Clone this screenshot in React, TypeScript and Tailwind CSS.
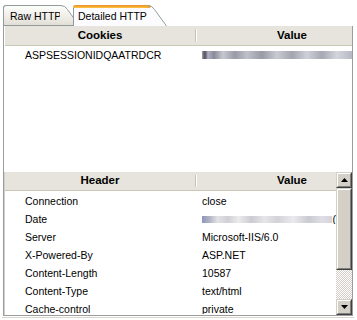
import React from "react";

function Tab({
  label,
  active,
  bodyW,
  textPad,
  className = "",
}: {
  label: string;
  active: boolean;
  bodyW: number;
  textPad: string;
  className?: string;
}) {
  return (
    <div className={`relative flex h-[21px] whitespace-nowrap ${active ? "z-10" : "z-0"} ${className}`}>
      {active ? (
        <div
          className={`h-full shrink-0 rounded-tl-[3px] border-l border-[#919b9c] bg-[#fcfcfe] flex flex-col ${textPad}`}
          style={{ width: bodyW }}
        >
          <div className="h-[3px] -ml-[5px] rounded-tl-[3px] bg-[linear-gradient(180deg,#e68b2c,#ffc73c)]" />
          <div className="flex-1 flex items-center text-[10.5px] leading-none pb-[1px]">{label}</div>
        </div>
      ) : (
        <div
          className={`h-full shrink-0 rounded-tl-[3px] border-l border-t border-b border-[#919b9c] bg-[linear-gradient(180deg,#fdfdfb,#ebe9e2_70%,#e0ddd4)] flex items-center text-[10.5px] leading-none pt-[1px] ${textPad}`}
          style={{ width: bodyW }}
        >
          {label}
        </div>
      )}
      <svg width="20" height="21" viewBox="0 0 20 21" className="block shrink-0">
        <defs>
          <linearGradient id="inact" x1="0" y1="0" x2="0" y2="1">
            <stop offset="0" stopColor="#fdfdfb" />
            <stop offset="0.7" stopColor="#ebe9e2" />
            <stop offset="1" stopColor="#e0ddd4" />
          </linearGradient>
        </defs>
        {active ? (
          <>
            <path d="M0 0 H1 Q5 0 7.5 4 L19 21 H0 Z" fill="#fcfcfe" />
            <path d="M0 0 H1 Q3 0 4 1 L3 3 H0 Z" fill="#f0a837" />
            <path d="M1 0.5 Q5 0.5 7.5 4.5 L19.5 21" fill="none" stroke="#919b9c" strokeWidth="1" />
          </>
        ) : (
          <>
            <path d="M0 0.5 H1 Q5 0.5 7.5 4.5 L19.5 21 H0 Z" fill="url(#inact)" />
            <path d="M0 0.5 H1 Q5 0.5 7.5 4.5 L19.5 21" fill="none" stroke="#919b9c" strokeWidth="1" />
            <path d="M0 20.5 H20" stroke="#919b9c" strokeWidth="1" />
          </>
        )}
      </svg>
    </div>
  );
}

function HeaderRow({ name, scroll }: { name: string; scroll?: boolean }) {
  return (
    <div
      className={`flex shrink-0 overflow-hidden bg-[#e6e4dd] border-b border-[#cbc7b8] text-[11.5px] font-bold leading-none ${
        scroll ? "h-[19px]" : "h-[20px]"
      }`}
    >
      <div className="w-[190px] shrink-0 flex items-center justify-center">{name}</div>
      <div className="w-[2px] shrink-0 my-[3px] border-l border-[#c5c2b2] border-r border-r-white" />
      <div className="w-[190px] shrink-0 flex items-center justify-center">Value</div>
    </div>
  );
}

function Row({ name, value }: { name: string; value: React.ReactNode }) {
  return (
    <div className="flex h-[18px] items-center text-[10.5px] leading-none whitespace-nowrap">
      <div className="w-[192px] shrink-0 pl-[20px]">{name}</div>
      <div className="pl-[5px] flex-1 overflow-hidden">{value}</div>
    </div>
  );
}

function ScrollButton({ up }: { up: boolean }) {
  return (
    <div className="h-[16px] w-[16px] bg-[#d4d0c8] border border-t-[#d4d0c8] border-l-[#d4d0c8] border-r-[#404040] border-b-[#404040] shrink-0">
      <div className="h-full w-full border border-t-white border-l-white border-r-[#808080] border-b-[#808080] flex items-center justify-center">
        <svg width="7" height="4" viewBox="0 0 7 4">
          {up ? <path d="M3.5 0 L7 4 H0 Z" fill="#000" /> : <path d="M0 0 H7 L3.5 4 Z" fill="#000" />}
        </svg>
      </div>
    </div>
  );
}

export default function App() {
  return (
    <div className="w-[357px] h-[320px] bg-white overflow-hidden text-black font-['Liberation_Sans',Arial,sans-serif]">
      {/* tab strip */}
      <div className="flex h-[26px] pt-[5px] pl-[3px]">
        <Tab label="Raw HTTP" active={false} bodyW={57} textPad="pl-[6px]" />
        <Tab label="Detailed HTTP" active bodyW={74} textPad="pl-[4px]" className="-ml-[7px]" />
      </div>

      {/* panel */}
      <div className="ml-[3px] w-[350px] h-[290px] border-l border-r border-b border-[#9c9c9c] flex flex-col">
        {/* cookies pane */}
        <div className="h-[146px] shrink-0 flex flex-col pl-[1px] overflow-hidden">
          <HeaderRow name="Cookies" />
          <Row
            name="ASPSESSIONIDQAATRDCR"
            value={
              <div className="flex items-center">
                <div className="h-[8px] w-[152px] blur-[0.6px] bg-[linear-gradient(90deg,#c9a040_0,#7070a0_1%,#505060_2%,#b0b0c0_4%,#8a8a9a_8%,#c8c8d0_14%,#9a9aa8_22%,#c0c0ca_30%,#9a9aa6_40%,#cacad2_50%,#a4a4b0_60%,#cfcfd8_70%,#a8a8b4_80%,#d4d4dc_90%,#b8b8c4_100%)]" />
              </div>
            }
          />
        </div>

        {/* headers pane */}
        <div className="flex-1 flex min-h-0 border-l border-[#d0d0d0]">
          <div className="flex-1 flex flex-col overflow-hidden">
            <HeaderRow name="Header" scroll />
            <div className="pt-[1px] flex flex-col">
              <Row name="Connection" value="close" />
              <Row
                name="Date"
                value={
                  <div className="flex items-center">
                    <div className="h-[7px] w-[133px] blur-[0.7px] bg-[linear-gradient(90deg,#8d96bc,#b4b6c4_6%,#e2e2e6_12%,#cfcfd5_20%,#ebebee_28%,#cbcbd2_38%,#e6e6ea_48%,#d2d2d8_58%,#eaeaee_70%,#cacad2_82%,#dedee4_92%,#d4d4da)]" />
                    <span className="ml-[1px]">(</span>
                  </div>
                }
              />
              <Row name="Server" value="Microsoft-IIS/6.0" />
              <Row name="X-Powered-By" value="ASP.NET" />
              <Row name="Content-Length" value="10587" />
              <Row name="Content-Type" value="text/html" />
              <Row name="Cache-control" value="private" />
            </div>
          </div>
          {/* scrollbar */}
          <div className="w-[16px] shrink-0 flex flex-col">
            <ScrollButton up />
            <div className="h-[82px] shrink-0 bg-[#d4d0c8] border border-t-[#d4d0c8] border-l-[#d4d0c8] border-r-[#404040] border-b-[#404040]">
              <div className="h-full w-full border border-t-white border-l-white border-r-[#808080] border-b-[#808080]" />
            </div>
            <div className="flex-1 bg-[repeating-conic-gradient(#d4d0c8_0_25%,#ffffff_0_50%)] bg-[length:2px_2px]" />
            <ScrollButton up={false} />
          </div>
        </div>
      </div>
      <div className="ml-[2px] mt-[1px] h-[1px] w-[352px] bg-[#d8d6cf]" />
    </div>
  );
}
